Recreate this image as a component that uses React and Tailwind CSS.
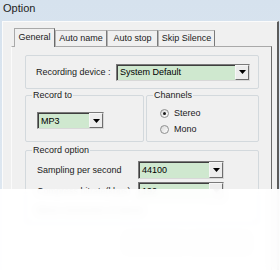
function Combo({ className, value }) {
  return (
    <div className={`flex border border-[#7a7a7a] border-b-[#d8d8d8] border-r-[#d8d8d8] ${className}`}>
      <div className="flex flex-1 items-center border-t border-l border-[#3f3f3f] bg-[#cfe8cf] pl-[2px] text-[9px] leading-none text-black">
        {value}
      </div>
      <div className="flex w-[14px] items-center justify-center border border-[#f7f7f7] border-b-[#6e6e6e] border-r-[#6e6e6e] bg-[#ededed]">
        <svg width="7" height="4" viewBox="0 0 7 4">
          <path d="M0 0H7L3.5 4Z" fill="#000" />
        </svg>
      </div>
    </div>
  );
}

function Group({ label, className, children }) {
  return (
    <div className={`relative rounded-[2px] border border-[#d3d9dd] ${className}`}>
      <span className="absolute -top-[6px] left-[6px] bg-[#f0f0f0] px-[1px] text-[9px] leading-[11px] text-[#1a1a1a]">
        {label}
      </span>
      {children}
    </div>
  );
}

function Radio({ checked, label }) {
  return (
    <div className="flex items-center gap-[5px]">
      <div className="flex h-[9px] w-[9px] items-center justify-center rounded-full border border-[#8e8f8f] bg-gradient-to-br from-[#d8d8d8] to-white">
        {checked && <div className="h-[3px] w-[3px] rounded-full bg-[#1a1a1a]" />}
      </div>
      <span className="text-[9px] leading-none text-[#1a1a1a]">{label}</span>
    </div>
  );
}

function Tab({ label, active, className }) {
  if (active) {
    return (
      <div className={`relative z-10 -mb-px flex h-[19px] items-center justify-center border border-b-0 border-[#a9a9a9] border-r-[#6a6a6a] bg-[#f0f0f0] text-[9px] text-[#1a1a1a] ${className}`}>
        {label}
      </div>
    );
  }
  return (
    <div className={`mt-[2px] flex h-[16px] items-center justify-center border border-b-0 border-[#b5b5b5] border-r-[#7a7a7a] bg-[#f0f0f0] text-[9px] text-[#1a1a1a] ${className}`}>
      {label}
    </div>
  );
}

export default function App() {
  return (
    <div className="relative h-[270px] w-[280px] overflow-hidden bg-gradient-to-b from-[#d6e2ee] to-[#e1e9f1] font-['Liberation_Sans',Arial,sans-serif]">
      <div className="h-[21px] pl-[3px] pt-[2px] text-[11px] leading-[13px] text-[#222]">Option</div>

      <div className="ml-[2px] h-[249px] w-[277px] border-l border-t border-r-2 border-[#fbfbfb] border-r-[#5b5b5b] bg-[#f0f0f0] pl-[8px] pt-[6px]">
        <div className="flex pl-[3px]">
          <Tab label="General" active className="w-[41px]" />
          <Tab label="Auto name" className="w-[52px]" />
          <Tab label="Auto stop" className="w-[51px]" />
          <Tab label="Skip Silence" className="w-[57px]" />
        </div>

        <div className="h-[230px] w-[261px] border border-[#fbfbfb] border-r-[#6a6a6a] border-t-[#a9a9a9] bg-[#f0f0f0] pl-[13px] pt-[8px]">
          <Group className="flex h-[34px] w-[234px] items-center justify-between pl-[10px] pr-[8px]">
            <span className="text-[9px] leading-none text-[#1a1a1a]">Recording device :</span>
            <Combo className="h-[17px] w-[134px]" value="System Default" />
          </Group>

          <div className="mt-[6px] flex gap-[2px]">
            <Group label="Record to" className="h-[47px] w-[119px] pl-[11px] pt-[16px]">
              <Combo className="h-[17px] w-[67px]" value="MP3" />
            </Group>
            <Group label="Channels" className="flex h-[47px] w-[113px] flex-col gap-[7px] pl-[13px] pt-[13px]">
              <Radio checked label="Stereo" />
              <Radio label="Mono" />
            </Group>
          </div>

          <Group label="Record option" className="mt-[8px] flex h-[74px] w-[234px] flex-col gap-[3px] pl-[11px] pt-[10px]">
            <div className="flex items-center">
              <span className="w-[101px] text-[9px] leading-none text-[#1a1a1a]">Sampling per second</span>
              <Combo className="h-[18px] w-[86px]" value="44100" />
            </div>
            <div className="flex items-center">
              <span className="w-[101px] text-[9px] leading-none text-[#1a1a1a]">Compress bitrate(kbps)</span>
              <Combo className="h-[18px] w-[86px]" value="192" />
            </div>
            <div className="flex items-center pt-[3px]">
              <span className="text-[9px] leading-none text-[#1a1a1a]">Mono conversion of stereo</span>
            </div>
          </Group>

          <div className="mt-[10px] flex gap-[4px] pl-[100px]">
            <div className="h-[18px] w-[60px] border border-[#b0b0b0] bg-[#ececec]" />
            <div className="h-[18px] w-[60px] border border-[#b0b0b0] bg-[#ececec]" />
          </div>
        </div>
      </div>

      <div className="absolute inset-x-0 bottom-0 top-[189px] bg-white/95 backdrop-blur-[3px]" />
    </div>
  );
}
